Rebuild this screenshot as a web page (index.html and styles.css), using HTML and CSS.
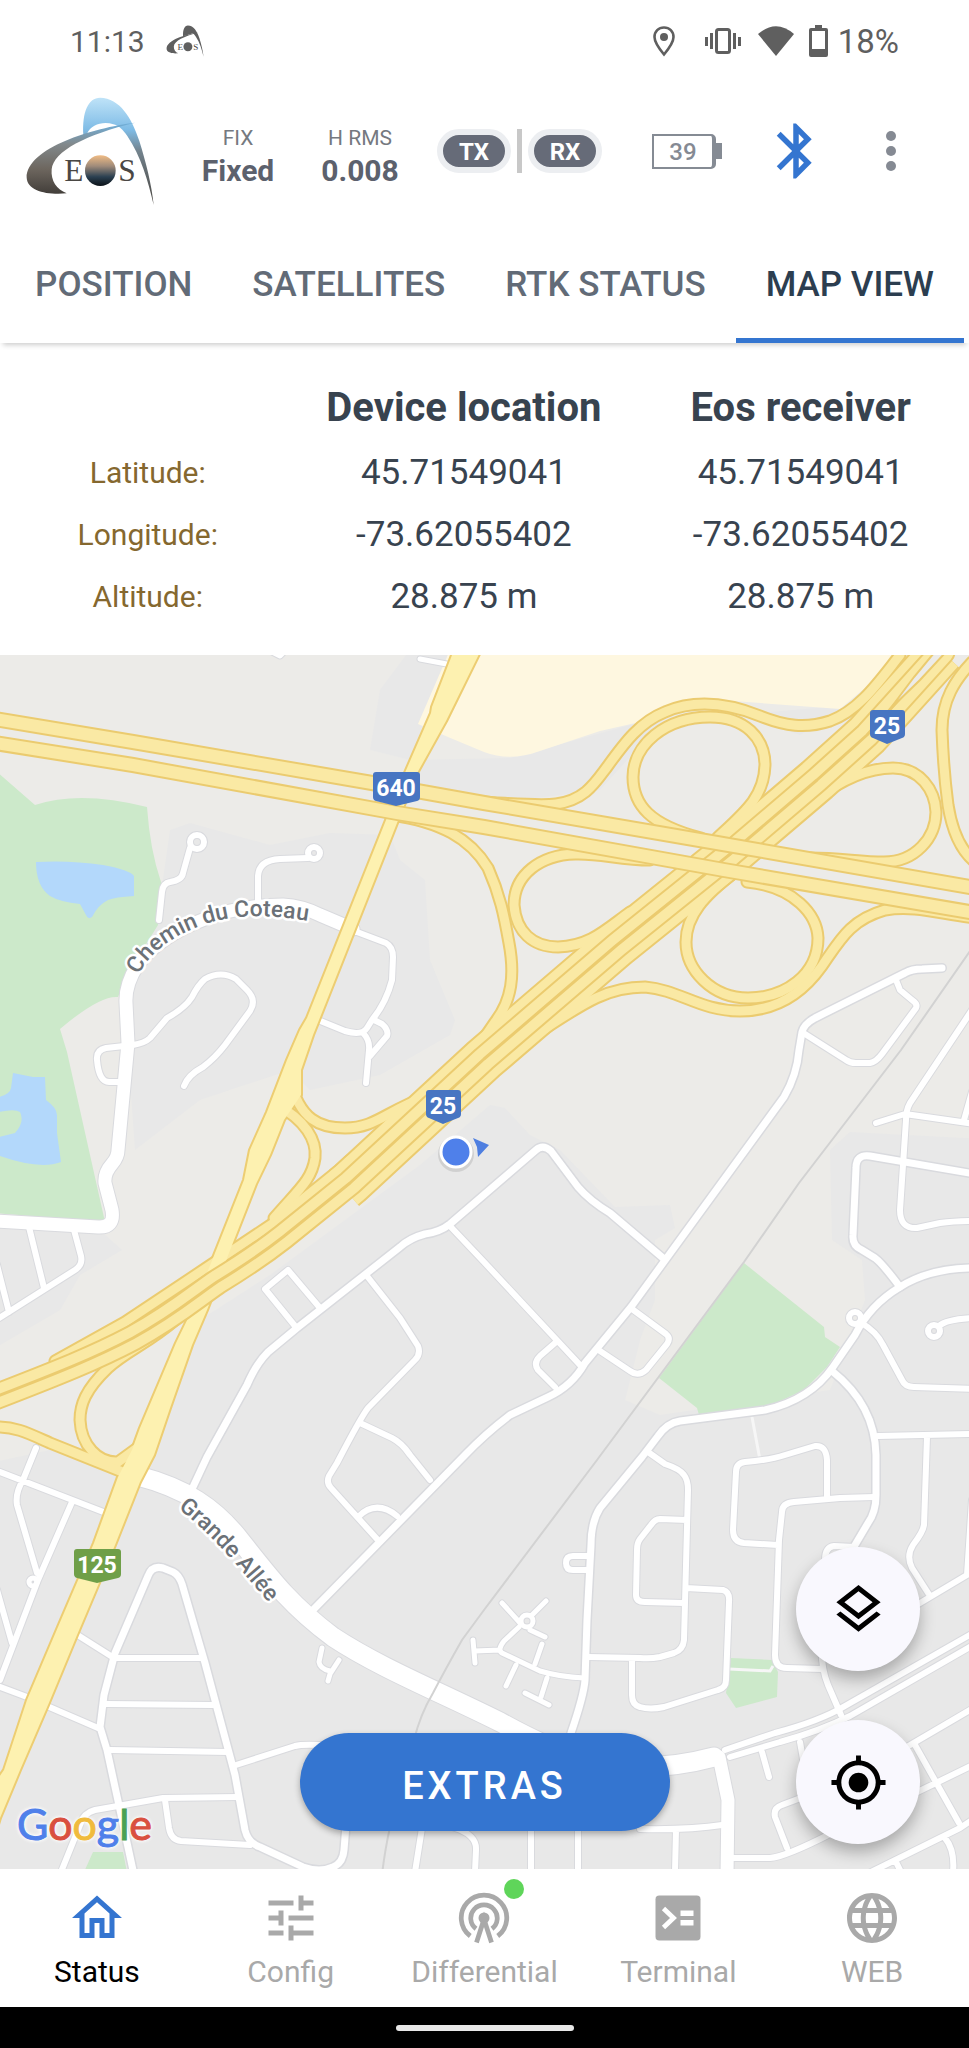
FILE: index.html
```html
<!DOCTYPE html>
<html lang="en">
<head>
<meta charset="utf-8">
<meta name="viewport" content="width=device-width, initial-scale=1">
<title>Eos Tools – Map view</title>
<link rel="stylesheet" href="styles.css">
</head>
<body>
<div class="status-bar">
  <span class="clock">11:13</span>
  <svg class="mini-logo" viewBox="45 45 390 330" aria-hidden="true">
    <path d="M220 162C216 92 235 50 270 50C330 52 365 110 388 180C408 245 425 310 431 372C415 300 392 225 352 165C335 142 330 135 315 132L230 158Z"/>
    <path d="M375 125C250 140 50 200 50 290C52 330 110 342 170 337C140 325 122 300 125 265C130 210 230 160 375 125Z"/>
    <text x="163" y="299" class="logo-letter">E</text><circle cx="270" cy="269" r="46"/><text x="325" y="299" class="logo-letter">S</text>
  </svg>
  <span class="spacer"></span>
  <svg class="st-pin" viewBox="0 0 22 31" aria-hidden="true"><path d="M11 1.500C5.500 1.500 1.500 5.500 1.500 11c0 6 9.500 17.500 9.500 17.500S20.500 17 20.500 11C20.500 5.500 16.500 1.500 11 1.500z" fill="none" stroke="#5f5f5f" stroke-width="2.600"/><circle cx="11" cy="11" r="4"/></svg>
  <svg class="st-vib" viewBox="0 0 36 26" aria-hidden="true"><rect x="11.500" y="1.500" width="13" height="23" rx="2" fill="none" stroke="#5f5f5f" stroke-width="3"/><path d="M0 9h3v9H0zM5 5h3v16H5zM28 5h3v16h-3zM33 9h3v9h-3z"/></svg>
  <svg class="st-wifi" viewBox="0 0 36 30" aria-hidden="true"><path d="M0 8Q18 -7.500 36 8L18 30z"/></svg>
  <svg class="st-batt" viewBox="0 0 19 32" aria-hidden="true"><path d="M6 0h7v3h4a2 2 0 0 1 2 2v25a2 2 0 0 1-2 2H2a2 2 0 0 1-2-2V5a2 2 0 0 1 2-2h4zM3 6v18h13V6z" fill-rule="evenodd"/></svg>
  <span class="percent">18%</span>
</div>

<header class="app-header">
  <svg class="logo" viewBox="45 45 390 330" role="img" aria-label="EOS">
    <defs>
      <linearGradient id="arc" gradientUnits="userSpaceOnUse" x1="0" y1="50" x2="0" y2="370"><stop offset="0" stop-color="#bfe3f8"/><stop offset=".3" stop-color="#7fbce6"/><stop offset=".5" stop-color="#73838d"/><stop offset="1" stop-color="#4a4641"/></linearGradient>
      <linearGradient id="sweep" gradientUnits="userSpaceOnUse" x1="0" y1="125" x2="0" y2="340"><stop offset="0" stop-color="#6fb0dc"/><stop offset=".3" stop-color="#82898c"/><stop offset=".65" stop-color="#6d665e"/><stop offset="1" stop-color="#413d39"/></linearGradient>
      <linearGradient id="globe" x1="0" y1="0" x2="0" y2="1"><stop offset="0" stop-color="#f0bc85"/><stop offset=".35" stop-color="#a08b7a"/><stop offset=".7" stop-color="#2b4051"/><stop offset="1" stop-color="#0b1218"/></linearGradient>
    </defs>
    <path fill="url(#arc)" d="M220 162C216 92 235 50 270 50C330 52 365 110 388 180C408 245 425 310 431 372C415 300 392 225 352 165C338 145 325 133 310 130C280 120 243 130 231 158Z"/>
    <path fill="url(#sweep)" d="M375 125C250 140 50 200 50 290C52 330 110 342 170 337C140 325 122 300 125 265C130 210 230 160 375 125Z"/>
    <text x="163" y="299" class="logo-letter">E</text><circle cx="271" cy="269" r="46" fill="url(#globe)"/><text x="325" y="299" class="logo-letter">S</text>
  </svg>
  <div class="stat"><span class="stat-label">FIX</span><strong class="stat-value">Fixed</strong></div>
  <div class="stat"><span class="stat-label">H RMS</span><strong class="stat-value">0.008</strong></div>
  <div class="signal"><span class="pill">TX</span><span class="divider"></span><span class="pill">RX</span></div>
  <div class="battery"><span class="battery-body">39</span><span class="battery-tip"></span></div>
  <button class="icon-button" type="button" aria-label="Bluetooth"><svg class="bt" viewBox="0 0 24 24"><path d="M17.710 7.710L12 2h-1v7.590L6.410 5 5 6.410 10.590 12 5 17.590 6.410 19 11 14.410V22h1l5.710-5.710-4.300-4.290 4.300-4.290zM13 5.830l1.880 1.880L13 9.590V5.830zm1.880 10.460L13 18.170v-3.760l1.880 1.880z"/></svg></button>
  <button class="icon-button" type="button" aria-label="More options"><svg class="kebab" viewBox="0 0 10 40"><circle cx="5" cy="5" r="5"/><circle cx="5" cy="20" r="5"/><circle cx="5" cy="35" r="5"/></svg></button>
</header>

<nav class="tabs" aria-label="Status sections">
  <a class="tab" href="#position">POSITION</a>
  <a class="tab" href="#satellites">SATELLITES</a>
  <a class="tab" href="#rtk">RTK STATUS</a>
  <a class="tab tab-active" href="#map" aria-current="page">MAP VIEW</a>
</nav>

<section class="location">
  <table class="coords">
    <colgroup><col class="col-label"><col class="col-value"><col class="col-value"></colgroup>
    <thead><tr><td></td><th scope="col">Device location</th><th scope="col">Eos receiver</th></tr></thead>
    <tbody>
      <tr><th scope="row">Latitude:</th><td>45.71549041</td><td>45.71549041</td></tr>
      <tr><th scope="row">Longitude:</th><td>-73.62055402</td><td>-73.62055402</td></tr>
      <tr><th scope="row">Altitude:</th><td>28.875 m</td><td>28.875 m</td></tr>
    </tbody>
  </table>
</section>

<main class="map" id="map">
<svg class="map-canvas" viewBox="0 655 969 1214" preserveAspectRatio="xMidYMid slice" role="img" aria-label="Map around highways 25 and 640">
  <defs>
    <g id="wide">
      <path d="M138 1476C185 1488 215 1508 240 1540C270 1578 290 1605 333 1637C380 1668 440 1692 500 1722C560 1755 620 1782 714 1757"/>
    </g>
    <g id="medium">
      <path d="M353 929L320 915Q302 906 283 905C255 905 230 909 205 919C175 930 150 947 137 966Q125 985 126 1003L128 1043L125 1075L118 1150Q118 1157 112 1164Q104 1173 105 1183L112 1210Q115 1228 98 1227L-5 1221"/>
      <path d="M719 1757L728 1800L727 1875"/>
    </g>
    <g id="main">
      <path d="M193 1487L207 1457L247 1385Q256 1364 268 1352Q280 1342 297 1328L400 1247Q410 1238 425 1234Q440 1232 450 1224L536 1150Q543 1144 551 1151L578 1187Q590 1201 610 1213L663 1258"/>
      <path d="M310 1613L465 1455Q485 1434 510 1415L548 1397Q572 1386 585 1363L631 1307L784 1097Q797 1075 799 1050L802 1032Q804 1024 815 1018L905 973Q912 969 922 969L942 968"/>
      <path d="M975 1174L870 1156Q856 1154 856 1168L853 1235Q852 1246 862 1250L875 1258Q882 1263 900 1287"/>
      <path d="M975 1268Q930 1268 900 1287Q870 1305 855 1335L833 1367Q810 1400 765 1410L680 1421Q667 1423 658 1436L642 1457L600 1508Q591 1522 591 1545L587 1620L585 1680Q584 1695 571 1733"/>
      <path d="M832 1371Q875 1405 876 1455L876 1495Q876 1512 868 1523L855 1545"/>
      <path d="M134 1875L120 1810L107 1750L100 1727L104 1695L115 1653L148 1576Q152 1565 163 1568L173 1572Q179 1575 182 1584L205 1663L235 1775L245 1830Q248 1843 260 1847L303 1867Q320 1873 333 1867Q343 1863 344 1850L346 1825"/>
    </g>
    <g id="minor">
      <circle cx="197" cy="842" r="7"/><path d="M190 848L183 873Q182 880 170 882Q163 883 162 892L159 920"/>
      <circle cx="314" cy="853" r="6"/><path d="M308 858L280 859Q259 860 258 876L258 900"/>
      <path d="M357 932L386 943Q393 947 393 957L392 980Q386 1003 372 1020L367 1028Q362 1036 345 1031L318 1020M363 1033Q370 1040 369 1050L366 1083M374 1020L382 1024Q389 1030 387 1036L370 1056"/>
      <path d="M184 1086Q188 1075 203 1067Q215 1058 225 1045L250 1011Q257 1000 247 990L236 979Q221 970 205 979Q198 985 192 997Q185 1008 167 1018L150 1038Q145 1043 133 1045L106 1048Q96 1050 97 1060Q99 1083 110 1082L118 1082"/>
      <path d="M29 1227L44 1288M74 1230L81 1256Q83 1265 75 1270L-4 1320M-3 1265L9 1312"/>
      <path d="M320 1308L288 1270L265 1289L295 1326M367 1276L400 1318L418 1346Q421 1354 415 1360L368 1408Q361 1417 337 1463L329 1476Q326 1483 331 1488L377 1539M360 1423L392 1438Q402 1443 410 1455L430 1480M358 1517Q376 1499 397 1516"/>
      <path d="M805 1034L846 1060Q850 1063 856 1063L870 1063Q876 1062 882 1054L916 1008Q918 1004 912 1000L900 990L896 980M449 1225L484 1262L580 1365M555 1343L540 1356Q533 1363 538 1370L555 1387M632 1309L666 1334Q671 1338 667 1344L646 1370Q638 1377 630 1371L600 1351"/>
      <path d="M972 1010L944 1052L910 1103Q906 1110 906 1120L900 1210Q900 1229 917 1228L940 1223Q955 1221 975 1221M876 1123L905 1114L975 1124M964 1120L972 1092"/>
      <circle cx="855" cy="1318" r="6"/><path d="M860 1322Q877 1332 883 1345L902 1380Q905 1387 914 1387L975 1389"/>
      <circle cx="934" cy="1331" r="6"/><path d="M939 1326Q947 1319 975 1318"/>
      <path d="M878 1436L975 1434M927 1437L924 1525Q923 1532 913 1545Q906 1556 912 1568L930 1596M915 1606L967 1575L972 1500"/>
      <path d="M827 1497L827 1460Q826 1445 815 1446L785 1455Q770 1460 745 1462Q736 1463 736 1472L733 1530Q733 1542 744 1543L778 1545M874 1497L840 1498L794 1502Q782 1503 782 1512L779 1540L775 1655Q775 1668 787 1668L822 1669M822 1640Q820 1665 828 1685L841 1715M825 1560Q825 1547 834 1546L855 1547"/>
      <path d="M648 1452L665 1464Q680 1469 684 1475Q688 1480 688 1490L684 1640Q683 1650 674 1653L660 1657Q650 1659 640 1658L588 1657M687 1520L660 1519Q655 1519 651 1525L640 1539Q637 1543 637 1550L636 1595Q636 1602 645 1602L684 1603M686 1588L723 1590Q730 1592 729 1602L726 1680Q726 1688 718 1690L664 1707Q650 1710 640 1707Q632 1705 632 1695L632 1660M589 1556L573 1556Q566 1556 566 1563Q566 1570 573 1570L588 1570"/>
      <path d="M-5 1470L106 1513M36 1448L23 1480Q15 1493 17 1505L37 1573M72 1502L38 1580L0 1680M-3 1590L12 1643M-5 1685L35 1700M47 1706L98 1728M76 1634L114 1658L203 1658M106 1704L213 1705M110 1750L228 1752M236 1765L295 1746Q302 1744 320 1745M61 1872L80 1825Q83 1813 95 1810L163 1798L238 1797M165 1800L169 1828Q171 1840 181 1841L250 1845"/>
      <path d="M422 1828L415 1872M455 1828Q477 1835 476 1850L475 1872M531 1828L531 1872M578 1828L578 1872M676 1830L675 1872M640 1829Q690 1830 722 1825M730 1858L770 1858Q785 1857 830 1834M870 1815L975 1764M865 1875L960 1828L975 1818M915 1745L959 1823M905 1748L975 1707M945 1838Q955 1850 953 1872M896 1862L902 1874M725 1750L775 1733Q820 1721 845 1706L975 1632M730 1757L780 1742Q820 1731 850 1716L975 1644M762 1752L769 1777M800 1742L804 1765M787 1848L775 1817Q773 1808 782 1805L830 1787"/>
    </g>
    <g id="tiny">
      <circle cx="527" cy="1621" r="6"/><circle cx="33" cy="1582" r="4"/>
      <path d="M521 1624L502 1603M531 1616L546 1601M519 1627L504 1641Q497 1650 502 1653L540 1671Q560 1677 584 1678M530 1630L545 1637M475 1651L500 1650M542 1644L535 1664M516 1665L506 1686M547 1678L541 1697M525 1693L549 1705M473 1640L475 1663M322 1648L319 1662Q320 1669 330 1671M339 1660L330 1674L328 1681M268 650L280 656L286 650M420 659L452 665"/>
    </g>
    <g id="ramps">
      <path d="M480 802C520 804 540 806 556 804C585 800 595 783 607 767C625 742 640 722 665 712C700 697 735 706 760 716C785 726 805 729 830 721C860 710 880 680 900 655"/>
      <path d="M717 838C745 812 764 797 765 765C765 738 745 717 710 717C665 717 633 745 633 777C633 805 650 825 701 838"/>
      <path d="M815 800C845 777 870 768 893 768C920 768 935 790 936 812C936 838 915 862 884 862C860 862 840 858 811 858"/>
      <path d="M972 662C955 680 942 700 942 730C943 760 946 790 948 805C952 830 960 850 975 862"/>
      <path d="M392 815C440 822 470 838 488 868C500 895 504 915 509 943C515 975 512 1000 495 1022L469 1060"/>
      <path d="M650 860C620 860 600 853 575 854C540 855 514 875 514 905C516 932 533 947 558 947C590 946 605 930 630 912"/>
      <path d="M747 882C795 887 817 915 818 938C818 975 785 998 748 998C712 998 686 970 686 942C686 915 705 895 735 872"/>
      <path d="M528 1040C590 998 610 987 645 987C680 990 700 1011 740 1011C780 1011 805 990 822 966C840 940 850 920 885 910C915 905 940 914 975 918"/>
      <path d="M290 1080C300 1120 320 1128 345 1128C375 1128 385 1112 425 1097"/>
      <path d="M277 1105C305 1120 317 1140 315 1158C312 1180 298 1190 274 1218"/>
      <path d="M175 1320C150 1342 125 1352 108 1368C85 1390 80 1405 80 1420C81 1445 98 1463 118 1462L140 1446"/>
      <path d="M-5 1427C15 1426 30 1434 50 1443L130 1475"/>
      <path d="M350 1160L339 1170L272 1224L206 1268L125 1322L55 1361"/>
    </g>
    <path id="route125" d="M454 650L481 650L446 721L416 775L319 1020L313 1035L301 1070L301 1095L284 1120L270 1155L256 1184L234 1240L207 1310L192 1345L170 1408L154 1455L140 1482L115 1545L77 1635L48 1705L20 1770L0 1818L-10 1850L-10 1790L4 1770L27 1700L58 1627L94 1543L118 1477L132 1450L140 1428L176 1343L193 1308L217 1248L244 1180L250 1150L267 1112L287 1060L300 1030L307 1018L404 775L431 713L432 707Z"/>
    <g id="h640"><path d="M-5 719L133 742L372 783L484 803L717 843L975 888"/><path d="M-5 743L133 765L397 813L484 827L724 870L975 913"/></g>
    <path id="h25" d="M-10 1399C60 1372 95 1358 133 1338C175 1315 195 1297 217 1282C240 1268 260 1255 283 1237L350 1183L484 1059L617 945L729 855L817 780L867 735L942 652"/>
    <path id="h25outer" d="M344 1188L350 1183L484 1059L617 945L729 855L817 780L867 735L942 652"/>
    <path id="blue-shield" d="M3 0H32Q35 0 35 3V24Q35 27 32 28L17 34L3 28Q0 27 0 24V3Q0 0 3 0Z"/>
    <path id="wide-shield" d="M3 0H44Q47 0 47 3V25Q47 28 44 29L23 34L3 29Q0 28 0 25V3Q0 0 3 0Z"/>
  </defs>

  <rect class="land" x="-500" y="0" width="2000" height="2600"/>
  <g class="urban">
    <path d="M170 830L190 823L270 845L330 833L390 835L400 860L425 880L430 960L455 1020L450 1035L380 1075L310 1090L290 1070L200 1100L135 1150L130 1080L125 1000L160 900Z"/>
    <path d="M370 750L380 690L410 650H450L410 760Z"/>
    <path d="M410 760L510 758L634 724L850 705L800 735L740 715L650 735L600 790L520 800L410 785Z"/>
    <path d="M0 1215L105 1235L122 1250L80 1275L60 1310L0 1345Z"/>
    <path d="M-20 1465L50 1450L140 1480L200 1320L270 1275L420 1165L490 1105L505 1108L530 1135L560 1150L615 1207L670 1205L675 1228L655 1240L655 1300L640 1340L625 1400L660 1415L830 1390L865 1300L862 1260L832 1240L830 1150L850 1132L1000 1140V1900H-20Z"/>
  </g>
  <path class="commercial" d="M450 650L418 724L448 737L484 752Q510 762 540 751L600 731L640 722L720 700L840 709L910 650Z"/>
  <g class="park">
    <path d="M-5 770L35 805Q80 790 147 807Q150 850 161 882L158 925L130 970L118 997Q100 995 60 1029L67 1052L105 1222L-5 1213Z"/>
    <path d="M744 1263L824 1327L825 1337L840 1347L827 1367L804 1390L761 1410L699 1415L697 1408L659 1378Z"/>
    <path d="M731 1658L772 1660L778 1672L777 1697L736 1708L726 1693Z"/>
    <path d="M93 1852H123L127 1872H84Z"/>
  </g>
  <g class="water">
    <path d="M36 862Q70 860 103 865Q130 870 134 876V896Q115 897 108 900Q98 905 92 917Q88 920 86 915L80 904Q60 902 50 896Q36 886 36 862Z"/>
    <path d="M13 1073L33 1077H45L46 1100Q57 1108 57 1115V1133L61 1162Q40 1170 0 1156H-5V1138L15 1133Q25 1122 20 1112Q14 1108 -5 1113V1098Q10 1095 11 1088Z"/>
  </g>
  <path d="M752 1417L760 1460M729 1669L770 1671L773 1666" class="footway"/>

  <use href="#tiny" class="casing tiny-c"/><use href="#minor" class="casing minor-c"/><use href="#main" class="casing main-c"/><use href="#medium" class="casing medium-c"/><use href="#wide" class="casing wide-c"/>
  <use href="#tiny" class="street tiny-f"/><use href="#minor" class="street minor-f"/><use href="#main" class="street main-f"/><use href="#medium" class="street medium-f"/><use href="#wide" class="street wide-f"/>
  <path class="rail" d="M975 944L901 1050L799 1183L744 1262L597 1460L484 1610L462 1640Q445 1670 433 1693Q420 1715 414 1740Q388 1820 382 1875"/>

  <use href="#route125" class="route-casing"/>
  <use href="#ramps" class="hw-casing ramp-c"/>
  <use href="#h25outer" class="hw-casing outer-c"/>
  <use href="#ramps" class="hw-fill ramp-f"/>
  <use href="#route125" class="route"/>
  <use href="#h25outer" class="hw-fill outer-f"/>
  <use href="#h25" class="hw-casing inner-c"/><use href="#h25" class="hw-fill inner-f"/><use href="#h25" class="hw-casing median"/>
  <path class="gap" d="M890 709L914 677L934 653H945L920 680Z"/>
  <use href="#h640" class="hw-casing h640-c"/><use href="#h640" class="hw-fill h640-f"/>

  <path id="coteau-line" d="M139 975C150 948 192 923 232 918C262 914 290 917 330 925" fill="none"/>
  <path id="allee-line" d="M178 1508C205 1530 223 1549 240 1569L285 1622" fill="none"/>
  <text class="road-name"><textPath href="#coteau-line">Chemin du Coteau</textPath></text>
  <text class="road-name"><textPath href="#allee-line">Grande Allée</textPath></text>

  <g class="shield">
    <use href="#blue-shield" x="870" y="710"/><text x="887" y="734">25</text>
    <use href="#blue-shield" x="426" y="1090"/><text x="443" y="1114">25</text>
    <use href="#wide-shield" x="373" y="772"/><text x="396" y="796">640</text>
    <use href="#wide-shield" x="74" y="1549" class="shield-green"/><text x="97" y="1573">125</text>
  </g>
  <circle class="dot-shadow" cx="456" cy="1154" r="18"/>
  <circle class="dot" cx="456" cy="1152" r="15"/>
  <path class="heading" d="M473 1138L489 1145L478 1157L477 1147Z"/>
</svg>
  <span class="google" aria-label="Google"><span class="g-blue">G</span><span class="g-red">o</span><span class="g-yellow">o</span><span class="g-blue">g</span><span class="g-green">l</span><span class="g-red">e</span></span>
  <button class="extras" type="button">EXTRAS</button>
  <div class="map-actions">
    <button class="fab" type="button" aria-label="Layers"><svg viewBox="0 0 24 24"><path d="M12 18.540L4.630 12.810 3 14.070l9 7 9-7-1.630-1.270L12 18.540zM12 16l7.360-5.730L21 9l-9-7-9 7 1.630 1.270L12 16zm0-11.470L17.740 9 12 13.470 6.260 9 12 4.530z"/></svg></button>
    <button class="fab" type="button" aria-label="My location"><svg viewBox="0 0 24 24"><path d="M12 8c-2.210 0-4 1.790-4 4s1.790 4 4 4 4-1.790 4-4-1.790-4-4-4zm8.940 3A8.994 8.994 0 0 0 13 3.060V1h-2v2.060A8.994 8.994 0 0 0 3.060 11H1v2h2.060A8.994 8.994 0 0 0 11 20.940V23h2v-2.060A8.994 8.994 0 0 0 20.940 13H23v-2h-2.060zM12 19c-3.870 0-7-3.130-7-7s3.130-7 7-7 7 3.130 7 7-3.130 7-7 7z"/></svg></button>
  </div>
</main>

<nav class="bottom-nav" aria-label="Main">
  <a class="nav-item nav-active" href="#status" aria-current="page"><svg viewBox="0 0 24 24"><path d="M12 5.690l5 4.500V18h-2v-6H9v6H7v-7.810l5-4.500M12 3L2 12h3v8h6v-6h2v6h6v-8h3L12 3z"/></svg><span>Status</span></a>
  <a class="nav-item" href="#config"><svg viewBox="0 0 24 24"><path d="M3 17v2h6v-2H3zM3 5v2h10V5H3zm10 16v-2h8v-2h-8v-2h-2v6h2zM7 9v2H3v2h4v2h2V9H7zm14 4v-2H11v2h10zm-6-4h2V7h4V5h-4V3h-2v6z"/></svg><span>Config</span></a>
  <a class="nav-item" href="#differential"><span class="badge-wrap"><svg viewBox="0 0 24 24"><path d="M6.500 19.200A9.100 9.100 0 1 1 17.500 19.200M8.800 16.300A5.300 5.300 0 1 1 15.200 16.300M9 21.800L12 12.500L15 21.800" fill="none" stroke="currentColor" stroke-width="1.900"/><circle cx="12" cy="12" r="2.200"/></svg><i class="badge"></i></span><span>Differential</span></a>
  <a class="nav-item" href="#terminal"><svg viewBox="0 0 24 24"><rect x="3" y="3" width="18" height="18" rx="1.500"/><path d="M6.200 8.200L10.200 12L6.200 15.800" fill="none" stroke="#fff" stroke-width="1.900"/><path d="M13 9h5.200v2.200H13zM13 12.800h5.200V15H13z" fill="#fff"/></svg><span>Terminal</span></a>
  <a class="nav-item" href="#web"><svg viewBox="0 0 24 24"><path d="M11.990 2C6.470 2 2 6.480 2 12s4.470 10 9.990 10C17.520 22 22 17.520 22 12S17.520 2 11.990 2zm6.930 6h-2.950c-.320-1.250-.780-2.450-1.380-3.560 1.840.630 3.370 1.910 4.330 3.560zM12 4.040c.830 1.200 1.480 2.530 1.910 3.960h-3.820c.430-1.430 1.080-2.760 1.910-3.960zM4.260 14C4.100 13.360 4 12.690 4 12s.1-1.360.260-2h3.380c-.080.660-.140 1.320-.140 2 0 .680.060 1.340.140 2H4.260zm.820 2h2.950c.320 1.250.780 2.450 1.380 3.560-1.840-.630-3.370-1.900-4.330-3.560zm2.950-8H5.080c.960-1.660 2.490-2.930 4.330-3.560C8.810 5.550 8.350 6.750 8.030 8zM12 19.960c-.830-1.200-1.480-2.530-1.910-3.960h3.820c-.430 1.430-1.080 2.760-1.910 3.960zM14.340 14H9.660c-.090-.660-.160-1.320-.160-2 0-.680.070-1.350.160-2h4.680c.090.650.160 1.320.160 2 0 .680-.070 1.340-.160 2zm.250 5.560c.6-1.110 1.060-2.310 1.380-3.560h2.950c-.960 1.650-2.490 2.930-4.330 3.560zM16.360 14c.080-.660.140-1.320.140-2 0-.680-.060-1.340-.140-2h3.380c.160.640.260 1.310.260 2s-.1 1.360-.260 2h-3.380z"/></svg><span>WEB</span></a>
</nav>
<div class="gesture-bar"><span class="gesture-pill"></span></div>
</body>
</html>
```
FILE: styles.css
```css
* { box-sizing: border-box; }

body {
  margin: 0;
  min-height: 100vh;
  display: flex;
  flex-direction: column;
  background: #fff;
  color: #38434f;
  font-family: Roboto, "Liberation Sans", sans-serif;
}

button { border: 0; padding: 0; font-family: inherit; cursor: pointer; }
a { text-decoration: none; }
svg { display: block; }

/* Device status bar */
.status-bar {
  height: 82px;
  padding: 0 70px;
  display: flex;
  align-items: center;
  color: #5f5f5f;
  fill: #5f5f5f;
  font-size: 30px;
}
.mini-logo { width: 38px; height: 32px; margin-left: 21px; }
.logo-letter { font-family: "Liberation Serif", serif; font-size: 94px; fill: #4a4744; }
.spacer { flex: 1; }
.st-pin { width: 22px; height: 31px; }
.st-vib { width: 36px; height: 26px; margin-left: 30px; }
.st-wifi { width: 36px; height: 30px; margin-left: 17px; }
.st-batt { width: 19px; height: 32px; margin-left: 15px; }
.percent { margin-left: 10px; font-size: 33px; }

/* Receiver summary */
.app-header {
  height: 138px;
  padding-right: 20px;
  display: grid;
  grid-template-columns: 180fr 116fr 128fr 191fr 144fr 74fr 116fr;
  align-items: center;
  justify-items: center;
}
.logo { width: 130px; height: 110px; }
.stat { display: flex; flex-direction: column; align-items: center; padding-top: 12px; }
.stat-label { font-size: 21px; line-height: 28px; color: #757980; }
.stat-value { font-size: 30px; line-height: 38px; color: #5c616d; }
.signal { display: flex; align-items: center; gap: 6px; }
.pill {
  width: 74px;
  height: 44px;
  border: 6px solid #eceef1;
  border-radius: 22px;
  background: #666b78;
  color: #fff;
  font-size: 24px;
  font-weight: 700;
  line-height: 34px;
  text-align: center;
}
.divider { width: 5px; height: 44px; background: #c8c8c8; }
.battery { display: flex; align-items: center; }
.battery-body {
  width: 64px;
  height: 35px;
  border: 2px solid #858b94;
  border-right-width: 4px;
  border-radius: 0 5px 5px 0;
  color: #858a93;
  font-size: 24px;
  font-weight: 500;
  line-height: 32px;
  text-align: center;
}
.battery-tip { width: 6px; height: 16px; background: #858b94; }
.icon-button { background: none; }
.bt { width: 66px; height: 66px; fill: #3475d0; }
.kebab { width: 10px; height: 40px; fill: #858a93; }

/* Tabs */
.tabs {
  position: relative;
  z-index: 1;
  height: 123px;
  display: flex;
  justify-content: center;
  box-shadow: 0 5px 5px -3px rgba(0, 0, 0, .2);
  background: #fff;
}
.tab {
  padding: 0 30px;
  display: flex;
  align-items: center;
  border-bottom: 5px solid transparent;
  padding-top: 10px;
  font-size: 35px;
  font-weight: 500;
  color: #626b77;
}
.tab-active { color: #2c3e50; border-bottom-color: #3475d0; }

/* Coordinates */
.location { padding: 32px 0 28px; }
.coords { width: 100%; border-collapse: collapse; table-layout: fixed; text-align: center; }
.col-label { width: 30.5%; }
.coords th, .coords td { height: 62px; padding: 0; }
.coords thead th { height: 66px; font-size: 40px; line-height: 48px; font-weight: 700; }
.coords td { font-size: 35px; }
.coords tbody th { font-size: 30px; font-weight: 400; color: #85682f; }

/* Map */
.map { position: relative; flex: 1; min-height: 600px; overflow: hidden; }
.map-canvas { position: absolute; inset: 0; width: 100%; height: 100%; }
.land { fill: #ecebe8; }
.urban { fill: #e8e8e8; }
.commercial { fill: #fef7e0; }
.park { fill: #cce9ca; }
.water { fill: #b3d8fb; }
.footway { fill: none; stroke: #f6f6f6; stroke-width: 3; }
.casing, .street, .hw-casing, .hw-fill { fill: none; stroke-linecap: round; stroke-linejoin: round; }
.casing { stroke: #d9dade; }
.street { stroke: #fff; }
.tiny-c { stroke-width: 7; }
.tiny-f { stroke-width: 5; }
.minor-c { stroke-width: 8; }
.minor-f { stroke-width: 6; }
.main-c { stroke-width: 10; }
.main-f { stroke-width: 7; }
.medium-c { stroke-width: 15; }
.medium-f { stroke-width: 13; }
.wide-c { stroke-width: 21; }
.wide-f { stroke-width: 19; }
.rail { fill: none; stroke: #d2d2d2; stroke-width: 2; }
.route-casing { fill: none; stroke: #edcd72; stroke-width: 4; stroke-linejoin: round; }
.route { fill: #fdf1b0; }
.hw-casing { stroke: #ebcb6f; }
.hw-fill { stroke: #fae9a4; }
.ramp-c { stroke-width: 13; }
.ramp-f { stroke-width: 9; }
.outer-c { stroke-width: 47; stroke-linecap: butt; }
.outer-f { stroke-width: 43; stroke-linecap: butt; }
.inner-c { stroke-width: 27; }
.inner-f { stroke-width: 23; }
.median { stroke-width: 3; }
.gap { fill: #ecebe8; stroke: #ebcb6f; stroke-width: 2; }
.h640-c { stroke-width: 16; }
.h640-f { stroke-width: 12; }
.road-name {
  font-size: 23px;
  font-weight: 500;
  fill: #6b7177;
  stroke: #fff;
  stroke-width: 5;
  stroke-linejoin: round;
  paint-order: stroke;
}
.shield { fill: #4775c2; }
.shield-green { fill: #6f9f48; }
.shield text { fill: #fff; font-size: 23px; font-weight: 700; text-anchor: middle; }
.dot-shadow { fill: rgba(0, 0, 0, .1); }
.dot { fill: #4f80ea; stroke: #fff; stroke-width: 3; }
.heading { fill: #4f7fe0; }

.google {
  position: absolute;
  left: 17px;
  bottom: 20px;
  font-family: Lato, sans-serif;
  font-size: 43px;
  line-height: 50px;
  text-shadow: 0 0 3px #fff, 0 0 4px #fff, 0 0 5px #fff;
  -webkit-text-stroke: 1px currentColor;
}
.g-blue { color: #4f80ea; }
.g-red { color: #d9503f; }
.g-yellow { color: #f0bb3d; }
.g-green { color: #4ca153; }

.extras {
  position: absolute;
  left: 0;
  right: 0;
  bottom: 38px;
  width: 370px;
  height: 98px;
  margin: 0 auto;
  border-radius: 49px;
  background: #3475d0;
  box-shadow: 0 3px 6px rgba(0, 0, 0, .3);
  color: #fff;
  font-size: 38px;
  font-weight: 500;
  letter-spacing: 4px;
  padding-top: 7px;
}
.map-actions {
  position: absolute;
  right: 49px;
  bottom: 25px;
  display: flex;
  flex-direction: column;
  gap: 49px;
}
.fab {
  width: 124px;
  height: 124px;
  display: grid;
  place-items: center;
  border-radius: 50%;
  background: #f9f8fe;
  box-shadow: 0 8px 16px rgba(0, 0, 0, .28);
}
.fab svg { width: 59px; height: 59px; }

/* Bottom navigation */
.bottom-nav {
  height: 138px;
  display: grid;
  grid-template-columns: repeat(5, 1fr);
  background: #fff;
}
.nav-item {
  display: flex;
  flex-direction: column;
  align-items: center;
  padding-top: 19px;
  gap: 6px;
  color: #a9a9a9;
  font-size: 30px;
  line-height: 36px;
}
.nav-item svg { width: 60px; height: 60px; fill: currentColor; }
.nav-active { color: #3475d0; }
.nav-active span { color: #000; }
.badge-wrap { position: relative; }
.badge {
  position: absolute;
  top: -9px;
  right: -10px;
  width: 20px;
  height: 20px;
  border-radius: 50%;
  background: #5fd55a;
}
.gesture-bar { height: 41px; display: grid; place-items: center; background: #000; }
.gesture-pill { width: 178px; height: 6px; border-radius: 3px; background: #e8e8e8; }
```
